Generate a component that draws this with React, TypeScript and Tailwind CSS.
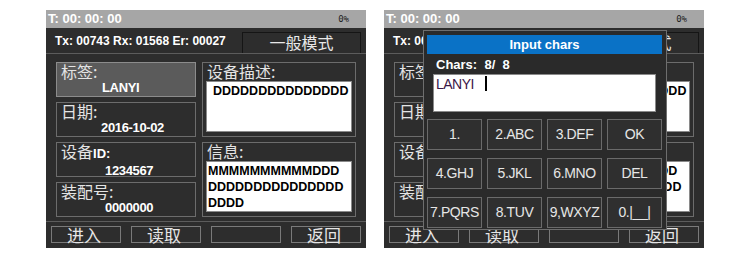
import React from "react";

const LAT = "font-['Liberation_Sans',Arial,sans-serif]";
const CJK = "font-['Noto_Sans_CJK_SC','Noto_Sans',sans-serif]";

function LeftField({
  label,
  value,
  pl,
  hl,
}: {
  label: React.ReactNode;
  value: string;
  pl: string;
  hl?: boolean;
}) {
  return (
    <div
      className={`h-[35px] border ${
        hl ? "bg-[#5b5b5b] border-[#8c8c8c]" : "border-[#6c6c6c]"
      }`}
    >
      <div className={`pl-[4px] text-[16px] leading-[16px] text-[#e4e4e4] ${CJK}`}>{label}</div>
      <div
        className={`${pl} mt-[2px] text-white font-bold text-[13px] leading-[13px] tracking-[-0.35px]`}
      >
        {value}
      </div>
    </div>
  );
}

function RightField({
  label,
  lines,
  pl,
}: {
  label: string;
  lines: string[];
  pl: string;
}) {
  return (
    <div className="h-[75px] border border-[#6c6c6c] flex flex-col">
      <div className={`pl-[4px] text-[16px] leading-[16px] text-[#e4e4e4] ${CJK}`}>{label}</div>
      <div
        className={`mx-[3px] mt-[2px] h-[51px] bg-white border border-[#8a8a8a] ${pl} pt-[1px] text-black font-bold text-[12.5px] leading-[16px] whitespace-pre overflow-hidden`}
      >
        {lines.map((l, i) => (
          <div key={i}>{l}</div>
        ))}
      </div>
    </div>
  );
}

function Screen({ highlight }: { highlight: boolean }) {
  return (
    <div className={`w-[320px] h-[238px] bg-[#2d2d2d] flex flex-col ${LAT}`}>
      <div className="h-[18px] shrink-0 bg-[#a6a6a6] flex items-center justify-between pl-[2px] pr-[17px]">
        <span className="text-white font-bold text-[13px] leading-[18px]">T: 00: 00: 00</span>
        <span className="text-[#1e1e1e] text-[9px] leading-[9px] font-['DejaVu_Sans_Mono',monospace]">
          0%
        </span>
      </div>
      <div className="h-[25px] shrink-0 flex items-start">
        <span className="pl-[9px] pt-[7px] text-white font-bold text-[12px] leading-[12px] whitespace-pre">
          Tx: 00743 Rx: 01568 Er: 00027
        </span>
        <div
          className={`ml-auto mr-[5px] mt-[4px] w-[119px] h-[21px] border-t border-l border-r border-[#151515] flex items-start justify-center pt-[1px] text-[16px] leading-[16px] text-[#e8e8e8] ${CJK}`}
        >
          一般模式
        </div>
      </div>
      <div className="h-px shrink-0 bg-[#5c5c5c]" />
      <div className="h-[167px] shrink-0 flex pt-[8px] pl-[10px] gap-[6px]">
        <div className="w-[140px] flex flex-col gap-[5px]">
          <LeftField label="标签:" value="LANYI" pl="pl-[45px]" hl={highlight} />
          <LeftField label="日期:" value="2016-10-02" pl="pl-[44px]" />
          <LeftField
            label={
              <>
                设备<span className={`${LAT} font-bold text-[13px] text-white`}>ID:</span>
              </>
            }
            value="1234567"
            pl="pl-[48px]"
          />
          <LeftField label="装配号:" value="0000000" pl="pl-[48px]" />
        </div>
        <div className="w-[154px] flex flex-col gap-[5px]">
          <RightField label="设备描述:" lines={["DDDDDDDDDDDDDDD"]} pl="pl-[6px]" />
          <RightField
            label="信息:"
            lines={["MMMMMMMMMMDDD", "DDDDDDDDDDDDDDD", "DDDD"]}
            pl="pl-[1px]"
          />
        </div>
      </div>
      <div className="h-px shrink-0 bg-[#5c5c5c]" />
      <div className="flex gap-[10px] pl-[5px] pt-[4px]">
        {["进入", "读取", "", "返回"].map((t, i) => (
          <div
            key={i}
            className={`w-[70px] h-[17px] border border-[#7a7a7a] flex items-center justify-center pr-[4px] text-[17px] leading-[17px] text-[#e6e6e6] ${CJK}`}
          >
            {t}
          </div>
        ))}
      </div>
    </div>
  );
}

const KEYS = [
  "1.",
  "2.ABC",
  "3.DEF",
  "OK",
  "4.GHJ",
  "5.JKL",
  "6.MNO",
  "DEL",
  "7.PQRS",
  "8.TUV",
  "9,WXYZ",
  "0.|__|",
];

function Popup() {
  return (
    <div
      className={`absolute left-[39px] top-[20px] w-[244px] h-[200px] bg-[#2a2a2a] border border-[#6e6e6e] pt-[4px] pl-[3px] pr-[4px] ${LAT}`}
    >
      <div className="h-[19px] bg-[#0a72c6] text-white font-bold text-[13px] leading-[19px] text-center">
        Input chars
      </div>
      <div className="h-[20px] pl-[9px] pt-[4px] text-white font-bold text-[13px] leading-[13px] whitespace-pre">
        Chars:  8/  8
      </div>
      <div className="mx-[6px] h-[38px] bg-white border border-[#8a8a8a] flex items-start pl-[2px] pt-[1px]">
        <span className="text-[#3b1648] text-[14px] leading-[14px] tracking-[-0.5px] mt-[1px]">LANYI</span>
        <span className="ml-[11px] w-[2px] h-[15px] bg-black" />
      </div>
      <div className="mt-[7px] grid grid-cols-4 gap-x-[5px] gap-y-[8px]">
        {KEYS.map((k) => (
          <div
            key={k}
            className="h-[31px] border border-[#6a6a6a] bg-[#2f2f2f] flex items-center justify-center text-[#e6e6e6] text-[14px] tracking-[-0.4px] whitespace-pre"
          >
            {k}
          </div>
        ))}
      </div>
    </div>
  );
}

export default function App() {
  return (
    <div className="w-[750px] h-[269px] bg-white flex items-start pt-[10px] pl-[46px] gap-[18px] overflow-hidden">
      <Screen highlight />
      <div className="relative">
        <Screen highlight={false} />
        <Popup />
      </div>
    </div>
  );
}
